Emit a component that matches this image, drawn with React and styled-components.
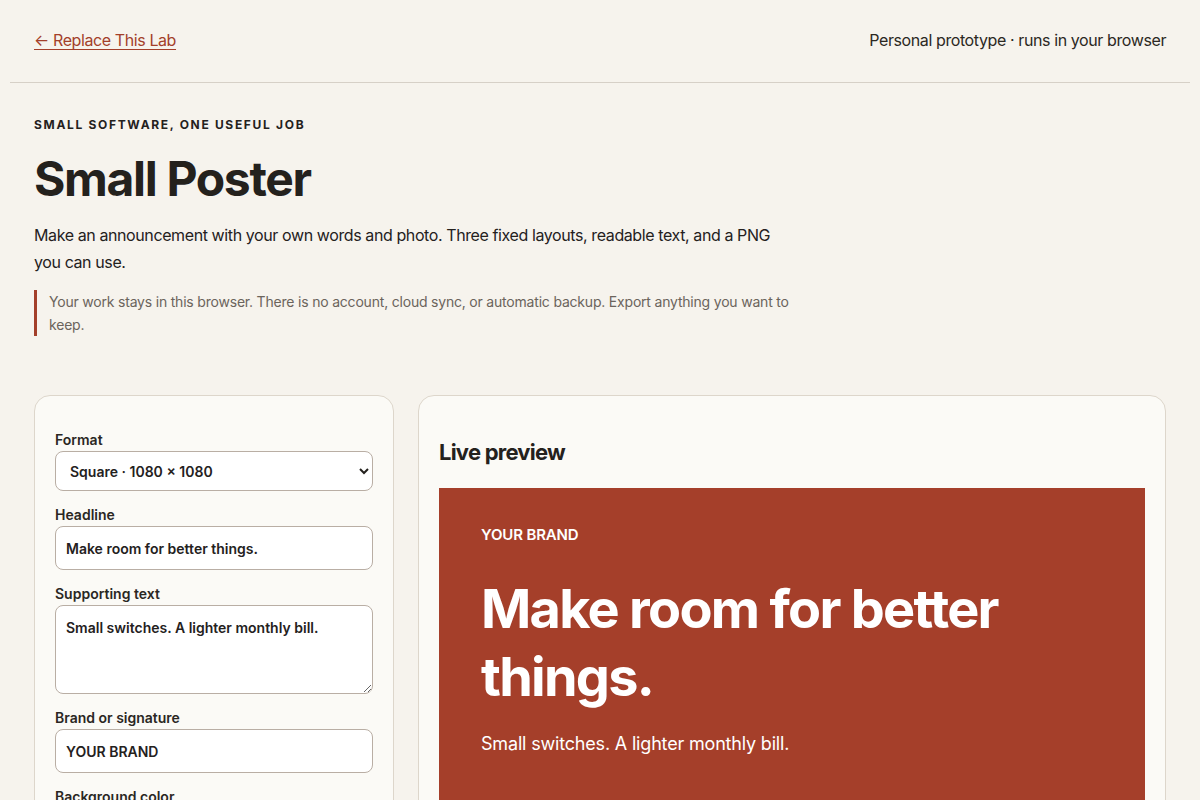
import React from "react";
import styled, { createGlobalStyle } from "styled-components";

const GlobalStyle = createGlobalStyle`
  * {
    box-sizing: border-box;
  }
  body {
    margin: 0;
    background: #f6f3ed;
    color: #24211d;
    font-family: Inter, "Noto Sans", "Liberation Sans", sans-serif;
  }
`;

const App = () => {
  return (
    <Page>
      <GlobalStyle />
      <TopBar>
        <BackLink href="#">← Replace This Lab</BackLink>
        <TopNote>Personal prototype · runs in your browser</TopNote>
      </TopBar>

      <Main>
        <Intro>
          <Eyebrow>Small software, one useful job</Eyebrow>
          <Title>Small Poster</Title>
          <Lead>
            Make an announcement with your own words and photo. Three fixed
            layouts, readable text, and a PNG you can use.
          </Lead>
          <Notice>
            Your work stays in this browser. There is no account, cloud sync,
            or automatic backup. Export anything you want to keep.
          </Notice>
        </Intro>

        <Workspace>
          <Controls>
            <Field>
              <Label htmlFor="format">Format</Label>
              <Select id="format" defaultValue="square">
                <option value="square">Square · 1080 × 1080</option>
                <option value="story">Story · 1080 × 1920</option>
                <option value="wide">Wide · 1920 × 1080</option>
              </Select>
            </Field>
            <Field>
              <Label htmlFor="headline">Headline</Label>
              <Input id="headline" defaultValue="Make room for better things." />
            </Field>
            <Field>
              <Label htmlFor="support">Supporting text</Label>
              <TextArea
                id="support"
                defaultValue="Small switches. A lighter monthly bill."
              />
            </Field>
            <Field>
              <Label htmlFor="brand">Brand or signature</Label>
              <Input id="brand" defaultValue="YOUR BRAND" />
            </Field>
            <Field>
              <Label htmlFor="bg">Background color</Label>
              <ColorInput id="bg" type="color" defaultValue="#a53f2a" />
            </Field>
          </Controls>

          <PreviewCard>
            <PreviewTitle>Live preview</PreviewTitle>
            <Poster>
              <PosterBrand>YOUR BRAND</PosterBrand>
              <PosterHeadline>Make room for better things.</PosterHeadline>
              <PosterText>Small switches. A lighter monthly bill.</PosterText>
            </Poster>
          </PreviewCard>
        </Workspace>
      </Main>
    </Page>
  );
};

const Page = styled.div`
  padding: 0 10px 40px;
`;

const TopBar = styled.header`
  display: flex;
  justify-content: space-between;
  align-items: center;
  height: 83px;
  padding: 0 24px 2px;
  border-bottom: 1px solid #d6d0c7;
`;

const BackLink = styled.a`
  font-size: 16px;
  letter-spacing: -0.4px;
  color: #a33f2a;
  text-decoration: underline;
  text-underline-offset: 3px;
  text-decoration-thickness: 1px;
`;

const TopNote = styled.span`
  font-size: 16px;
  letter-spacing: -0.4px;
  color: #2b2823;
`;

const Main = styled.main`
  padding: 0 24px;
`;

const Intro = styled.section`
  padding-top: 34px;
`;

const Eyebrow = styled.p`
  margin: 0;
  font-size: 12px;
  font-weight: 700;
  letter-spacing: 0.14em;
  text-transform: uppercase;
  color: #24211d;
`;

const Title = styled.h1`
  margin: 19px 0 0;
  font-size: 48px;
  line-height: 56px;
  font-weight: 700;
  letter-spacing: -0.028em;
`;

const Lead = styled.p`
  margin: 15px 0 0;
  max-width: 760px;
  font-size: 16px;
  line-height: 27px;
  letter-spacing: -0.4px;
  color: #24211d;
`;

const Notice = styled.p`
  margin: 14px 0 0;
  max-width: 760px;
  padding: 0 0 0 12px;
  border-left: 3px solid #a33f2a;
  font-size: 14px;
  line-height: 23px;
  letter-spacing: -0.2px;
  color: #6b645c;
`;

const Workspace = styled.div`
  display: grid;
  grid-template-columns: 360px 1fr;
  gap: 24px;
  margin-top: 59px;
  align-items: start;
`;

const Card = styled.div`
  background: #fbfaf6;
  border: 1px solid #ddd6cb;
  border-radius: 16px;
`;

const Controls = styled(Card)`
  display: flex;
  flex-direction: column;
  gap: 15px;
  padding: 35px 20px 24px;
`;

const Field = styled.div`
  display: flex;
  flex-direction: column;
  gap: 2px;
`;

const Label = styled.label`
  font-size: 14px;
  line-height: 18px;
  font-weight: 600;
  color: #2a2723;
`;

const controlBase = `
  width: 100%;
  font-family: Inter, "Noto Sans", "Liberation Sans", sans-serif;
  font-size: 14px;
  font-weight: 600;
  color: #24211d;
  background: #ffffff;
  border: 1px solid #b9aea4;
  border-radius: 8px;
`;

const Select = styled.select`
  ${controlBase}
  height: 40px;
  padding: 0 10px;
`;

const Input = styled.input`
  ${controlBase}
  height: 44px;
  padding: 0 10px;
`;

const TextArea = styled.textarea`
  ${controlBase}
  height: 89px;
  padding: 12px 10px 10px;
  line-height: 20px;
  resize: vertical;
`;

const ColorInput = styled.input`
  width: 100%;
  height: 44px;
  padding: 4px;
  border: 1px solid #b9aea4;
  border-radius: 8px;
  background: #ffffff;
`;

const PreviewCard = styled(Card)`
  padding: 41px 20px 20px;
`;

const PreviewTitle = styled.h2`
  margin: 0 0 21px;
  font-size: 22px;
  line-height: 30px;
  font-weight: 700;
  letter-spacing: -0.035em;
`;

const Poster = styled.div`
  aspect-ratio: 1 / 1;
  background: #a53f2a;
  color: #ffffff;
  padding: 38px 42px;
`;

const PosterBrand = styled.div`
  font-size: 15px;
  line-height: 18px;
  font-weight: 600;
  letter-spacing: -0.01em;
`;

const PosterHeadline = styled.div`
  margin-top: 31px;
  max-width: 560px;
  font-size: 54px;
  line-height: 68px;
  font-weight: 700;
  letter-spacing: -0.032em;
`;

const PosterText = styled.div`
  margin-top: 21px;
  font-size: 18px;
  line-height: 24px;
  letter-spacing: -0.01em;
`;

export default App;
